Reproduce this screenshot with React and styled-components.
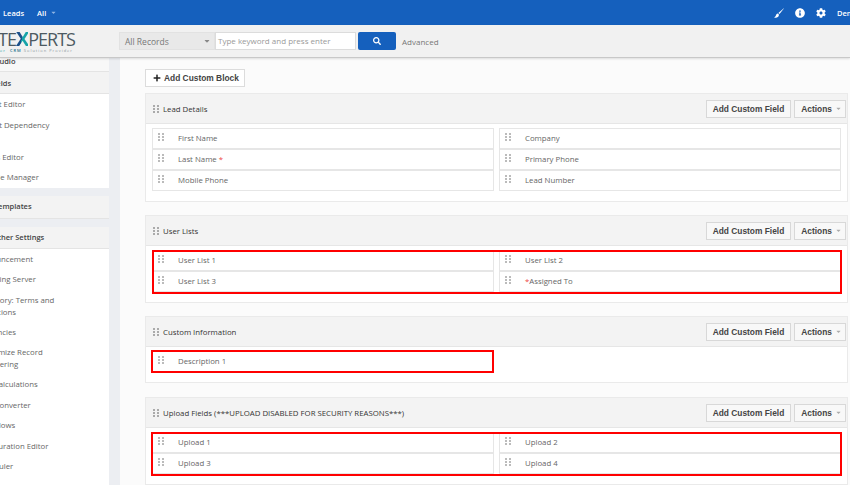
import styled, { createGlobalStyle } from "styled-components";
import { FaInfoCircle, FaCog, FaSearch, FaPlus, FaCaretDown } from "react-icons/fa";

const GlobalStyle = createGlobalStyle`
  html, body {
    margin: 0;
    padding: 0;
    height: 100%;
    overflow: hidden;
    background: #fbfbfb;
    font-family: "Open Sans", "Liberation Sans", sans-serif;
  }
  * { box-sizing: border-box; }
`;

const Page = styled.div`
  width: 850px;
  height: 485px;
  overflow: hidden;
  display: flex;
  flex-direction: column;
`;

const TopBar = styled.header`
  height: 25px;
  flex: none;
  background: #1560bd;
  color: #fff;
  display: flex;
  align-items: center;
  padding-left: 3px;
  font-size: 7.5px;
  font-weight: 600;
`;

const TopLink = styled.span`
  margin-right: 13px;
  display: flex;
  align-items: center;
  gap: 4px;
`;

const TopIcons = styled.div`
  margin-left: auto;
  display: flex;
  align-items: center;
  gap: 11px;
  white-space: nowrap;
  width: 76px;
  overflow: hidden;
  flex: none;
  svg { flex: none; }
`;

const BrushIcon = styled.svg`
  width: 10px;
  height: 10px;
  fill: #fff;
`;

const SearchBar = styled.div`
  height: 33px;
  flex: none;
  background: #f1f1f1;
  border-bottom: 1px solid #c8c8c8;
  box-shadow: 0 1px 2px rgba(0, 0, 0, 0.12);
  display: flex;
  align-items: center;
  position: relative;
  z-index: 1;
`;

const Logo = styled.div`
  width: 119px;
  flex: none;
  overflow: hidden;
  color: #4d5a62;
  padding-top: 2px;
`;

const LogoWord = styled.div`
  font-size: 18px;
  line-height: 16px;
  letter-spacing: -1px;
  white-space: nowrap;
  margin-left: -2px;
`;

const LogoX = styled.span`
  font-weight: 700;
  font-size: 20px;
  background: linear-gradient(105deg, #1a4f8a 50%, #16a3a8 50%);
  -webkit-background-clip: text;
  background-clip: text;
  color: transparent;
`;

const LogoTag = styled.div`
  font-size: 4px;
  line-height: 5px;
  letter-spacing: 1px;
  color: #8b969b;
  white-space: nowrap;
  margin-top: 1px;
  em { color: #16a3a8; font-style: normal; }
  strong { color: #1a6f8a; font-weight: 600; }
`;

const RecordSelect = styled.div`
  width: 96px;
  height: 18px;
  background: #e9e9e9;
  border: 1px solid #e2e2e2;
  color: #777;
  font-size: 8.5px;
  display: flex;
  align-items: center;
  justify-content: space-between;
  padding: 0 3px 0 5px;
  svg { font-size: 8px; color: #888; }
`;

const SearchInput = styled.div`
  width: 141px;
  height: 18px;
  background: #fff;
  border: 1px solid #dcdcdc;
  color: #999;
  font-size: 8px;
  line-height: 15px;
  padding-left: 2px;
`;

const SearchButton = styled.div`
  width: 38px;
  height: 18px;
  margin-left: 2px;
  background: #1560bd;
  border-radius: 2px;
  color: #fff;
  font-size: 8px;
  display: flex;
  align-items: center;
  justify-content: center;
`;

const AdvancedLink = styled.span`
  margin-left: 6px;
  color: #777;
  font-size: 8px;
`;

const Body = styled.div`
  flex: 1;
  min-height: 0;
  display: flex;
`;

const Sidebar = styled.aside`
  width: 120px;
  flex: none;
  background: #eceef2;
  overflow: hidden;
  padding-right: 11px;
`;

const SideInner = styled.div`
  margin-left: -60px;
  background: #fff;
  font-size: 7.8px;
  color: #666;
`;

const SideHead = styled.div`
  height: ${(p) => p.$h}px;
  padding-bottom: ${(p) => p.$lift || 0}px;
  padding-left: ${(p) => p.$pad}px;
  background: ${(p) => p.$bg || "#f3f3f3"};
  color: #444;
  font-size: 7.5px;
  font-weight: 600;
  display: flex;
  align-items: center;
  border-bottom: 1px solid #e4e4e4;
  white-space: nowrap;
`;

const SideGap = styled.div`
  height: 8px;
  background: #eceef2;
`;

const SideItem = styled.div`
  padding: 4px 0 4px ${(p) => p.$pad || 37}px;
  line-height: 12px;
  min-height: ${(p) => p.$min || 20.5}px;
  width: 125px;
`;

const Main = styled.main`
  flex: 1;
  min-width: 0;
  background: #fbfbfb;
  padding: 11px 2px 0 25px;
  overflow: hidden;
`;

const AddBlock = styled.button`
  display: flex;
  align-items: center;
  gap: 3px;
  height: 18px;
  width: 100px;
  padding: 0 0 0 7px;
  background: #fff;
  border: 1px solid #dcdcdc;
  color: #444;
  font: 700 8.4px "Liberation Sans", sans-serif;
  white-space: nowrap;
  margin-bottom: 6px;
  svg { font-size: 8px; color: #222; flex: none; }
`;

const Block = styled.section`
  background: #fff;
  border: 1px solid #eaeaea;
  margin-bottom: ${(p) => p.$gap}px;
`;

const BlockHead = styled.div`
  height: 30px;
  background: #f3f3f3;
  border-bottom: 1px solid #e6e6e6;
  display: flex;
  align-items: center;
  padding: 0 1px 0 7px;
  color: #333;
  font-size: 7.8px;
  font-weight: 400;
`;

const Grip = styled.svg`
  width: 6px;
  height: 8px;
  flex: none;
  margin-right: ${(p) => p.$gap}px;
  fill: ${(p) => p.$color};
`;

const HeadButton = styled.button`
  height: 18px;
  margin-left: 3px;
  padding: 0 ${(p) => (p.$menu ? 3 : 6)}px 0 6px;
  background: #f8f8f8;
  border: 1px solid #d8d8d8;
  color: #444;
  font: 700 8.4px "Liberation Sans", sans-serif;
  white-space: nowrap;
  display: flex;
  align-items: center;
  gap: 3px;
  svg { font-size: 7px; color: #aaa; }
  &:first-of-type { margin-left: auto; }
`;

const Fields = styled.div`
  padding: 4px 7px 10px 6px;
  display: grid;
  grid-template-columns: 342px 342px;
  column-gap: 5px;
  position: relative;
`;

const Field = styled.div`
  height: 21px;
  background: #fff;
  border: 1px solid #e6e6e6;
  display: flex;
  align-items: flex-start;
  padding: 4px 0 0 5px;
  font-size: 7.8px;
  line-height: 10px;
  color: #666;
`;

const Required = styled.span`
  color: #e44;
`;

/* red annotation drawn over the field rows */
const Marker = styled.div`
  position: absolute;
  left: ${(p) => p.$left}px;
  top: ${(p) => p.$top}px;
  width: ${(p) => p.$width}px;
  height: ${(p) => p.$height}px;
  border: 2px solid #f00;
  pointer-events: none;
`;

const GripIcon = ({ gap = 0, color = "#aaa" }) => (
  <Grip viewBox="0 0 6 8" $gap={gap} $color={color}>
    {[0, 3, 6].map((y) => (
      <g key={y}>
        <rect x="0" y={y} width="2" height="2" />
        <rect x="4" y={y} width="2" height="2" />
      </g>
    ))}
  </Grip>
);

const sideTop = [
  { text: "Layout Editor" },
  { text: "Picklist Dependency", min: 32 },
  { text: "Labels Editor" },
  { text: "Module Manager" },
];

const sideOther = [
  { text: "Announcement" },
  { text: "Outgoing Server" },
  { text: "Inventory: Terms and Conditions" },
  { text: "Currencies" },
  { text: "Customize Record Numbering" },
  { text: "Tax Calculations", pad: 39 },
  { text: "Lead Converter", pad: 35 },
  { text: "Workflows" },
  { text: "Configuration Editor", pad: 35 },
  { text: "Scheduler" },
  { text: "Customer Portal" },
];

const blocks = [
  {
    title: "Lead Details",
    gap: 13,
    fields: ["First Name", "Company", "Last Name *", "Primary Phone", "Mobile Phone", "Lead Number"],
  },
  {
    title: "User Lists",
    gap: 13,
    fields: ["User List 1", "User List 2", "User List 3", "*Assigned To"],
    marker: { left: 6, top: 4, width: 690, height: 44 },
  },
  {
    title: "Custom Information",
    gap: 14,
    fields: ["Description 1"],
    marker: { left: 5, top: 3, width: 343, height: 23 },
  },
  {
    title: "Upload Fields (***UPLOAD DISABLED FOR SECURITY REASONS***)",
    gap: 0,
    fields: ["Upload 1", "Upload 2", "Upload 3", "Upload 4"],
    marker: { left: 5, top: 4, width: 691, height: 44 },
  },
];

const FieldLabel = ({ text }) => {
  if (text.startsWith("*")) {
    return (
      <span>
        <Required>*</Required>
        {text.slice(1)}
      </span>
    );
  }
  if (text.endsWith("*")) {
    return (
      <span>
        {text.slice(0, -1)}
        <Required>*</Required>
      </span>
    );
  }
  return <span>{text}</span>;
};

export default function App() {
  return (
    <Page>
      <GlobalStyle />
      <TopBar>
        <TopLink>Leads</TopLink>
        <TopLink>
          All <FaCaretDown size={7} color="#8fb4e4" />
        </TopLink>
        <TopIcons>
          <BrushIcon viewBox="0 0 10 10">
            <path d="M9.8 0.2 L4.4 5 L5.5 6.1 L9.9 0.4 Z" />
            <path d="M3.9 5.5 C2.5 5.6 2.2 6.8 1.8 7.8 C1.5 8.6 0.8 9.1 0.1 9.4 C2 10 4.6 9.8 5 6.7 Z" />
          </BrushIcon>
          <FaInfoCircle size={10} />
          <FaCog size={10} />
          <span>Demo</span>
        </TopIcons>
      </TopBar>
      <SearchBar>
        <Logo>
          <LogoWord>
            TE<LogoX>X</LogoX>PERTS
          </LogoWord>
          <LogoTag>
            <em>er</em>&nbsp;&nbsp;<strong>CRM</strong> Solution Provider
          </LogoTag>
        </Logo>
        <RecordSelect>
          All Records <FaCaretDown />
        </RecordSelect>
        <SearchInput>Type keyword and press enter</SearchInput>
        <SearchButton>
          <FaSearch />
        </SearchButton>
        <AdvancedLink>Advanced</AdvancedLink>
      </SearchBar>
      <Body>
        <Sidebar>
          <SideInner>
            <SideHead $h={14} $lift={7} $pad={22} $bg="#f8f8f8">Layouts Studio</SideHead>
            <SideHead $h={22} $pad={21}>Module Fields</SideHead>
            {sideTop.map((item) => (
              <SideItem key={item.text} $min={item.min}>
                {item.text}
              </SideItem>
            ))}
            <SideGap />
            <SideHead $h={23} $lift={1} $pad={32}>Email Templates</SideHead>
            <SideGap />
            <SideHead $h={22} $lift={1} $pad={41}>All Other Settings</SideHead>
            {sideOther.map((item) => (
              <SideItem key={item.text} $pad={item.pad}>
                {item.text}
              </SideItem>
            ))}
          </SideInner>
        </Sidebar>
        <Main>
          <AddBlock>
            <FaPlus /> Add Custom Block
          </AddBlock>
          {blocks.map((block) => (
            <Block key={block.title} $gap={block.gap}>
              <BlockHead>
                <GripIcon gap={4} />
                {block.title}
                <HeadButton>Add Custom Field</HeadButton>
                <HeadButton $menu>
                  Actions <FaCaretDown />
                </HeadButton>
              </BlockHead>
              <Fields>
                {block.fields.map((field) => (
                  <Field key={field}>
                    <GripIcon gap={14} color="#bbb" />
                    <FieldLabel text={field} />
                  </Field>
                ))}
                {block.marker && (
                  <Marker
                    $left={block.marker.left}
                    $top={block.marker.top}
                    $width={block.marker.width}
                    $height={block.marker.height}
                  />
                )}
              </Fields>
            </Block>
          ))}
        </Main>
      </Body>
    </Page>
  );
}
